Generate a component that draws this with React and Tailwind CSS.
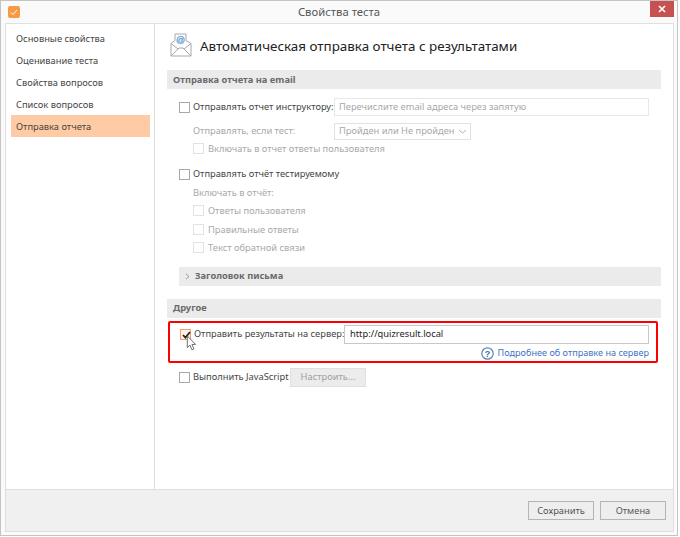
import React from "react";

const menu = ["Основные свойства", "Оценивание теста", "Свойства вопросов", "Список вопросов", "Отправка отчета"];

function Check({ disabled, checked }) {
  return (
    <span
      className={`relative block w-[11px] h-[11px] shrink-0 border ${
        checked ? "border-[#f0a070] bg-[#fff1e8]" : disabled ? "border-[#e2e2e2] bg-white" : "border-[#a8a8a8] bg-white"
      }`}
    >
      {checked && (
        <svg className="absolute left-[1px] top-[1px]" width="9" height="8" viewBox="0 0 9 8" fill="none">
          <path d="M1 4l2.4 2.6L8 1" stroke="#222" strokeWidth="1.7" />
        </svg>
      )}
    </span>
  );
}

function SectionBar({ children }) {
  return (
    <div className="h-[19px] bg-[#ebebeb] flex items-center pl-[6px] font-bold text-[#6a6a6a]">{children}</div>
  );
}

function EnvelopeIcon() {
  return (
    <svg width="22" height="24" viewBox="0 0 22 24" fill="none">
      <path d="M1 10.5L5 7.5V1h11v6.5l5 3V23H1z" fill="#fff" stroke="#a9a9a9" />
      <path d="M1 10.5L8 16M21 10.5L14 16M1 23l8-8h4l8 8" stroke="#a9a9a9" />
      <circle cx="10.5" cy="7" r="4.5" fill="#dbe8f6" />
      <text x="10.5" y="10" fontSize="9" textAnchor="middle" fill="#4a86c8" fontFamily="Liberation Sans, sans-serif">@</text>
    </svg>
  );
}

function CursorIcon() {
  return (
    <svg className="absolute left-[185px] top-[334px]" width="11" height="16" viewBox="0 0 13 19" fill="none">
      <path d="M1.5 1v14l3.2-3 2.3 5.5 2.4-1-2.4-5.3h4.3z" fill="#fff" stroke="#555" strokeLinejoin="round" />
    </svg>
  );
}

export default function App() {
  return (
    <div className="w-[680px] h-[537px] bg-white">
      <div
        className="relative w-[678px] h-[536px] bg-[#fafafa] border border-[#c4c4c4] flex flex-col text-[9.3px] leading-none text-[#444] overflow-hidden"
        style={{ fontFamily: '"Noto Sans", "Open Sans", sans-serif' }}
      >
        {/* title bar */}
        <div className="relative h-[22px] shrink-0 flex items-center justify-center text-[11.3px] text-[#555]">
          <span className="absolute left-[7px] top-[5px] w-[12px] h-[12px] rounded-[2px] bg-[#f79a45] flex items-center justify-center">
            <svg width="8" height="7" viewBox="0 0 8 7" fill="none">
              <path d="M1 3.5l2 2L7 1" stroke="#fff" strokeWidth="1" />
            </svg>
          </span>
          Свойства теста
          <span className="absolute right-[3px] top-0 w-[24px] h-[16px] bg-[#c75050] flex items-center justify-center">
            <svg width="8" height="8" viewBox="0 0 8 8" fill="none">
              <path d="M1 1l6 6M7 1L1 7" stroke="#fff" strokeWidth="1.6" />
            </svg>
          </span>
        </div>

        {/* body */}
        <div className="flex flex-1 ml-[4px] mr-[3px] bg-white border-x border-t border-[#e0e0e0] min-h-0">
          <div className="w-[149px] shrink-0 border-r border-[#dcdcdc] px-[5px] pt-[3px]">
            {menu.map((item, i) => (
              <div
                key={item}
                className={`h-[22px] flex items-center pl-[5px] pt-[1px] w-[139px] ${i === 4 ? "bg-[#ffcba4]" : ""}`}
              >
                {item}
              </div>
            ))}
          </div>

          <div className="flex-1 pl-[12px] pr-[12px] pt-[9px] min-w-0">
            <div className="flex items-center gap-[8px] h-[24px] pl-[3px]">
              <EnvelopeIcon />
              <span className="text-[13.4px] text-[#222] mt-[3px] whitespace-nowrap">Автоматическая отправка отчета с результатами</span>
            </div>

            <div className="mt-[13px]">
              <SectionBar>Отправка отчета на email</SectionBar>
            </div>

            <div className="pl-[12px] pr-[12px] mt-[9px]">
              <div className="flex items-center gap-[3px] h-[18px]">
                <Check />
                <span className="w-[138px] whitespace-nowrap">Отправлять отчет инструктору:</span>
                <div className="flex-1 h-[18px] border border-[#e8e8e8] flex items-center pl-[4px] text-[#a8a8a8]">
                  Перечислите email адреса через запятую
                </div>
              </div>
              <div className="flex items-center h-[18px] mt-[6px] text-[#a8a8a8] pl-[14px]">
                <span className="w-[141px]">Отправлять, если тест:</span>
                <div className="w-[137px] h-[17px] border border-[#e2e2e2] flex items-center justify-between pl-[4px] pr-[3px] whitespace-nowrap">
                  Пройден или Не пройден
                  <svg width="9" height="5" viewBox="0 0 9 5" fill="none">
                    <path d="M1 1l3.5 3L8 1" stroke="#b0b0b0" />
                  </svg>
                </div>
              </div>
              <div className="flex items-center gap-[4px] h-[17px] text-[#a8a8a8] pl-[14px]">
                <Check disabled />
                Включать в отчет ответы пользователя
              </div>

              <div className="flex items-center gap-[3px] h-[18px] mt-[8px]">
                <Check />
                Отправлять отчёт тестируемому
              </div>
              <div className="flex items-center h-[17.5px] mt-[1px] text-[#a8a8a8] pl-[14px]">Включать в отчёт:</div>
              {["Ответы пользователя", "Правильные ответы", "Текст обратной связи"].map((t) => (
                <div key={t} className="flex items-center gap-[4px] h-[18.5px] text-[#a8a8a8] pl-[14px]">
                  <Check disabled />
                  {t}
                </div>
              ))}

              <div className="mt-[9.5px] h-[19px] bg-[#ebebeb] flex items-center gap-[5px] pl-[6px] mr-[-12px] font-bold text-[#6a6a6a]">
                <svg width="5" height="7" viewBox="0 0 5 7" fill="none">
                  <path d="M1 .8l3 2.7-3 2.7" stroke="#999" />
                </svg>
                Заголовок письма
              </div>
            </div>

            <div className="mt-[13px]">
              <SectionBar>Другое</SectionBar>
            </div>

            <div className="mt-[3px] ml-[1px] h-[42px] w-[490px] border-2 border-[#ff0000] rounded-[2px] pl-[10px] pr-[7px] pt-[2px]">
              <div className="flex items-center gap-[3px] h-[19px]">
                <Check checked />
                <span className="w-[147px] whitespace-nowrap">Отправить результаты на сервер:</span>
                <div className="flex-1 h-[19px] border border-[#c8c8c8] flex items-center pl-[5px] text-[#222]">
                  http://quizresult.local
                </div>
              </div>
              <div className="flex items-center justify-end gap-[4px] h-[17px] mt-[1px] text-[9.1px] text-[#3f74c4]">
                <svg width="13" height="13" viewBox="0 0 13 13" fill="none">
                  <circle cx="6.5" cy="6.5" r="5.7" stroke="#5a83ba" strokeWidth="1.2" />
                  <text x="6.5" y="9.6" fontSize="9" fontWeight="700" textAnchor="middle" fill="#4a6d9e" fontFamily="Liberation Sans, sans-serif">?</text>
                </svg>
                Подробнее об отправке на сервер
              </div>
            </div>

            <div className="flex items-center gap-[3px] h-[19px] mt-[5px] pl-[12px]">
              <Check />
              <span className="w-[94px] whitespace-nowrap">Выполнить JavaScript</span>
              <div className="w-[76px] h-[19px] bg-[#ececec] border border-[#e0e0e0] flex items-center justify-center text-[#a0a0a0]">
                Настроить...
              </div>
            </div>
          </div>
        </div>

        {/* footer */}
        <div className="h-[43px] shrink-0 ml-[4px] mr-[3px] mb-[3px] bg-[#f0f0f0] border border-[#dedede] flex items-center justify-end gap-[6px] pr-[7px]">
          <button className="w-[66px] h-[19px] bg-[#eeeeee] border border-[#b5b5b5] text-[#555] text-[9.3px]">Сохранить</button>
          <button className="w-[66px] h-[19px] bg-[#eeeeee] border border-[#b5b5b5] text-[#555] text-[9.3px]">Отмена</button>
        </div>

        <CursorIcon />
      </div>
    </div>
  );
}
